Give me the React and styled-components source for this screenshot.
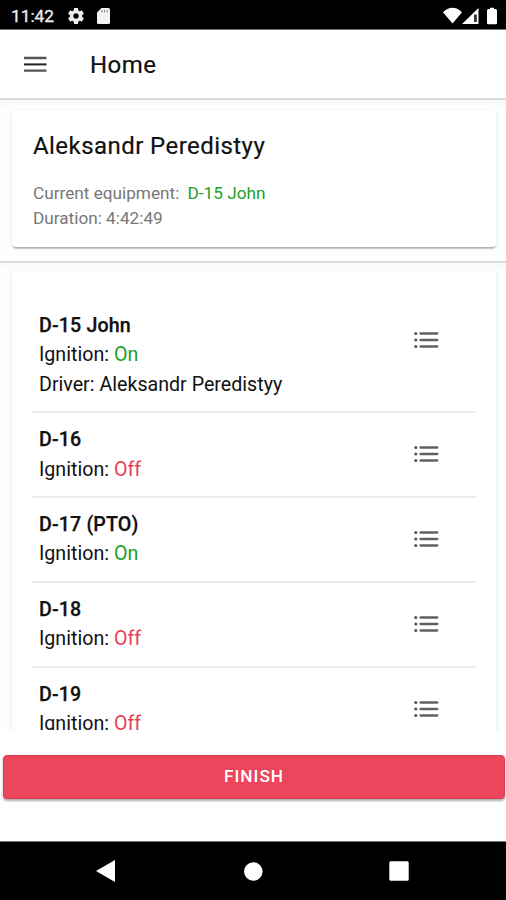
import { createGlobalStyle, styled } from "styled-components";

const GlobalStyle = createGlobalStyle`
  * {
    box-sizing: border-box;
  }

  body {
    margin: 0;
    background: #fff;
    font-family: Roboto, sans-serif;
    color: #111;
  }
`;

const Screen = styled.div`
  display: flex;
  flex-direction: column;
  width: 506px;
  height: 900px;
  overflow: hidden;
  background: #fefefe;
`;

const StatusBar = styled.div`
  display: flex;
  align-items: center;
  flex: none;
  height: 30px;
  padding: 2px 7px 0 11px;
  background: #000;
  border-bottom: 1px solid #777;
  color: #eee;
`;

const Time = styled.span`
  width: 57px;
  font-size: 17.3px;
  font-weight: 400;
  -webkit-text-stroke: 0.3px #eee;
  white-space: nowrap;
`;

const StatusIcons = styled.div`
  display: flex;
  align-items: center;
  gap: 13px;
  margin-left: ${(props) => (props.$right ? "auto" : "0")};
`;

const Header = styled.header`
  display: flex;
  align-items: center;
  flex: none;
  gap: 43px;
  height: 70px;
  padding: 0 24px;
  background: #fff;
  border-bottom: 2px solid #dadada;
`;

const Title = styled.h1`
  margin: 0;
  padding-top: 2px;
  font-size: 24px;
  font-weight: 400;
  -webkit-text-stroke: 0.2px #111;
  letter-spacing: 0.5px;
`;

const Summary = styled.section`
  flex: none;
  height: 163px;
  padding: 11px 10px 0 12px;
  background: linear-gradient(#f6f6f6, #fefefe 8px);
  border-bottom: 2px solid #dcdcdc;
`;

const Card = styled.div`
  background: #fff;
  border-radius: 4px;
  box-shadow: 0 3px 1px -1px rgba(0, 0, 0, 0.16), 0 1px 1px rgba(0, 0, 0, 0.1),
    0 1px 4px rgba(0, 0, 0, 0.12);
`;

const DriverCard = styled(Card)`
  height: 136px;
  padding: 18px 21px;
`;

const DriverName = styled.h2`
  margin: 0 0 18px;
  font-size: 24px;
  line-height: 34px;
  font-weight: 400;
  -webkit-text-stroke: 0.2px #111;
  letter-spacing: 0.44px;
`;

const Detail = styled.div`
  font-size: 17.2px;
  line-height: 25.4px;
  color: #777;

  span {
    margin-left: 4px;
    color: #1a9f27;
  }
`;

const ListArea = styled.section`
  flex: none;
  height: 467px;
  padding: 8px 10px 0 12px;
  overflow: hidden;
  background: linear-gradient(#f8f8f8, #fefefe 8px);
`;

const ListCard = styled(Card)`
  height: 700px;
  padding: 27.5px 20px;
`;

const Row = styled.div`
  display: flex;
  justify-content: space-between;
  padding: 12px 37px 11.7px 7px;
  border-bottom: 2px solid #ebebeb;
`;

const RowText = styled.div`
  font-size: 19.65px;
  line-height: 29.6px;
`;

const Name = styled.div`
  font-weight: 500;
  -webkit-text-stroke: 0.25px #111;
  letter-spacing: 0.14px;
`;

const Status = styled.span`
  color: ${(props) => (props.$on ? "#1a9f27" : "#e83f58")};
`;

const ListIcon = styled.svg`
  flex: none;
  margin-top: 20.5px;
`;

const Footer = styled.footer`
  flex: none;
  height: 111px;
  padding: 25px 1px 0 3px;
  background: #fff;
`;

const FinishButton = styled.button`
  display: block;
  width: 100%;
  height: 44px;
  padding: 0 0 2px;
  border: 1px solid #dc3a52;
  border-radius: 4px;
  background: #ed455b;
  box-shadow: 0 2px 2px rgba(0, 0, 0, 0.25), 0 1px 4px rgba(0, 0, 0, 0.12);
  color: #fff;
  font-family: inherit;
  font-size: 17.26px;
  font-weight: 500;
  letter-spacing: 1px;
`;

const NavBar = styled.nav`
  display: flex;
  align-items: center;
  justify-content: space-between;
  flex: 1;
  padding: 0 97px 0 96px;
  background: #000;
  border-top: 1px solid #777;
`;

const equipment = [
  { name: "D-15 John", on: true, driver: "Aleksandr Peredistyy" },
  { name: "D-16", on: false },
  { name: "D-17 (PTO)", on: true },
  { name: "D-18", on: false },
  { name: "D-19", on: false },
];

function App() {
  return (
    <Screen>
      <GlobalStyle />
      <StatusBar>
        <Time>11:42</Time>
        <StatusIcons>
          <svg width="16" height="16" viewBox="2 2 20 20" fill="#eee">
            <path d="M19.43 12.98c.04-.32.07-.64.07-.98s-.03-.66-.07-.98l2.11-1.65c.19-.15.24-.42.12-.64l-2-3.46c-.12-.22-.39-.3-.61-.22l-2.49 1c-.52-.4-1.08-.73-1.69-.98l-.38-2.65A.49.49 0 0 0 14 2h-4c-.25 0-.46.18-.49.42l-.38 2.65c-.61.25-1.17.59-1.69.98l-2.49-1c-.23-.09-.49 0-.61.22l-2 3.46c-.13.22-.07.49.12.64l2.11 1.65c-.04.32-.07.65-.07.98s.03.66.07.98l-2.11 1.65c-.19.15-.24.42-.12.64l2 3.46c.12.22.39.3.61.22l2.49-1c.52.4 1.08.73 1.69.98l.38 2.65c.03.24.24.42.49.42h4c.25 0 .46-.18.49-.42l.38-2.65c.61-.25 1.17-.59 1.69-.98l2.49 1c.23.09.49 0 .61-.22l2-3.46c.12-.22.07-.49-.12-.64l-2.11-1.65zM12 15.5c-1.93 0-3.5-1.57-3.5-3.5s1.57-3.5 3.5-3.5 3.5 1.57 3.5 3.5-1.57 3.5-3.5 3.5z" />
          </svg>
          <svg width="13" height="16" viewBox="0 0 13 16">
            <path
              d="M4.5 0H11.5A1.5 1.5 0 0 1 13 1.5V14.5A1.5 1.5 0 0 1 11.5 16H1.5A1.5 1.5 0 0 1 0 14.5V4.5Z"
              fill="#f2f2f2"
            />
            <path d="M5 2.2V4.4M7.5 2.2V4.4M10 2.2V4.4" stroke="#777" />
          </svg>
        </StatusIcons>
        <StatusIcons $right>
          <svg width="56" height="18" viewBox="0 0 56 18" fill="#fff">
            <path d="M0 5.2Q9.5 -3.5 19 5.2L9.5 16.5Z" />
            <path d="M19 17L35.5 1V17Z" />
            <path d="M31 7.5H33.8V15H31Z" fill="#333" />
            <path d="M47 .7H51V2H52.5Q54 2 54 3.5V16Q54 17.2 52.8 17.2H45.2Q44 17.2 44 16V3.5Q44 2 45.5 2H47Z" />
          </svg>
        </StatusIcons>
      </StatusBar>

      <Header>
        <svg width="23" height="16" viewBox="0 0 23 16">
          <path d="M0 2H22.5M0 14.6H22.5" stroke="#555" strokeWidth="2.3" />
          <path d="M0 8.4H22.5" stroke="#222" strokeWidth="2" />
        </svg>
        <Title>Home</Title>
      </Header>

      <Summary>
        <DriverCard>
          <DriverName>Aleksandr Peredistyy</DriverName>
          <Detail>
            Current equipment: <span>D-15 John</span>
          </Detail>
          <Detail>Duration: 4:42:49</Detail>
        </DriverCard>
      </Summary>

      <ListArea>
        <ListCard>
          {equipment.map((item) => (
            <Row key={item.name}>
              <RowText>
                <Name>{item.name}</Name>
                <div>
                  Ignition: <Status $on={item.on}>{item.on ? "On" : "Off"}</Status>
                </div>
                {item.driver && <div>Driver: {item.driver}</div>}
              </RowText>
              <ListIcon width="25" height="18" viewBox="0 0 25 18">
                <path
                  d="M6.5 2.5H23.3M6.5 9H23.3M6.5 15.5H23.3"
                  stroke="#606060"
                  strokeWidth="2.3"
                  strokeLinecap="round"
                />
                <path
                  d="M1.8 2.5H1.81M1.8 9H1.81M1.8 15.5H1.81"
                  stroke="#505050"
                  strokeWidth="3.1"
                  strokeLinecap="round"
                />
              </ListIcon>
            </Row>
          ))}
        </ListCard>
      </ListArea>

      <Footer>
        <FinishButton>FINISH</FinishButton>
      </Footer>

      <NavBar>
        <svg width="19" height="22" viewBox="0 0 19 22">
          <path d="M0 11L19 0V22Z" fill="#fff" />
        </svg>
        <svg width="22" height="19" viewBox="0 0 22 19">
          <circle cx="12.3" cy="9.5" r="9.3" fill="#fff" />
        </svg>
        <svg width="20" height="20" viewBox="0 0 20 20">
          <rect x=".3" y=".3" width="19.4" height="19.4" rx="1.5" fill="#fff" />
        </svg>
      </NavBar>
    </Screen>
  );
}

export default App;
